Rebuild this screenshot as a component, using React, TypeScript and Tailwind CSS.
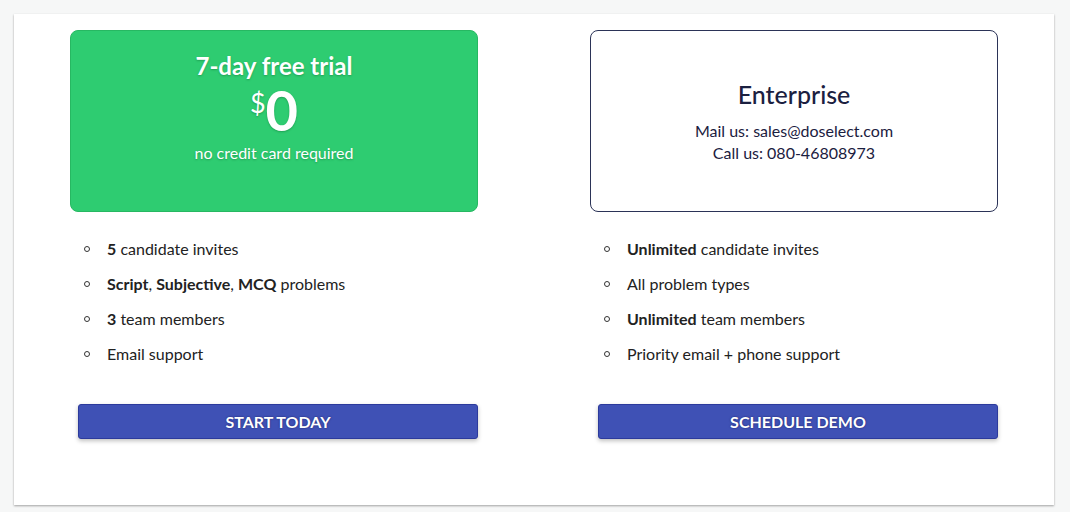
const font = { fontFamily: "Lato, 'Noto Sans', sans-serif" };

type Part = string | { b: string };

const trialFeatures: Part[][] = [
  [{ b: "5" }, " candidate invites"],
  [{ b: "Script" }, ", ", { b: "Subjective" }, ", ", { b: "MCQ" }, " problems"],
  [{ b: "3" }, " team members"],
  ["Email support"],
];

const enterpriseFeatures: Part[][] = [
  [{ b: "Unlimited" }, " candidate invites"],
  ["All problem types"],
  [{ b: "Unlimited" }, " team members"],
  ["Priority email + phone support"],
];

function FeatureList({ items }: { items: Part[][] }) {
  return (
    <ul className="mt-[19px] pl-[14px] text-[16px] leading-[35px] text-[#222]">
      {items.map((parts, i) => (
        <li key={i} className="flex items-center">
          {/* hollow circle bullet */}
          <span className="w-[6px] h-[6px] rounded-full border-[1.5px] border-[#333] mr-[17px] shrink-0" />
          <span>
            {parts.map((p, j) =>
              typeof p === "string" ? (
                <span key={j}>{p}</span>
              ) : (
                <span key={j} className="font-bold">
                  {p.b}
                </span>
              )
            )}
          </span>
        </li>
      ))}
    </ul>
  );
}

function ActionButton({ label }: { label: string }) {
  return (
    <div className="mt-[33px] pl-[8px]">
      <button className="w-full h-[35px] rounded-[3px] bg-[#3f51b5] border border-[#2c3a9c] text-white font-bold text-[16px] uppercase shadow-[0_2px_4px_rgba(0,0,0,0.25)] [text-shadow:0_0_2px_rgba(0,0,60,0.6)]">
        {label}
      </button>
    </div>
  );
}

export default function App() {
  return (
    <div className="min-h-[512px] bg-[#f6f7f7] pt-[14px] pl-[14px] pr-[16px] pb-[6px]" style={font}>
      <div className="bg-white shadow-[0_1px_2px_rgba(0,0,0,0.35)] px-[56px] pt-[16px] pb-[66px] grid grid-cols-2 gap-[112px]">
        <div>
          <div className="h-[182px] rounded-[8px] bg-[#2ecc71] border border-[#27b862] flex flex-col items-center pt-[18px] text-white [text-shadow:0_1px_2px_rgba(0,80,30,0.35)]">
            <div className="text-[24px] font-bold leading-[34px]">7-day free trial</div>
            <div className="flex items-start leading-none mt-[2px]">
              <span className="text-[27px] mt-[4px]">$</span>
              <span className="text-[56px] font-bold leading-[50px]">0</span>
            </div>
            <div className="text-[16px] leading-[22px] mt-[7px]">no credit card required</div>
          </div>
          <FeatureList items={trialFeatures} />
          <ActionButton label="Start today" />
        </div>
        <div>
          <div className="h-[182px] rounded-[8px] border-[1.5px] border-[#2b3357] flex flex-col items-center justify-center text-[#1b2040]">
            <div className="text-[25px] font-medium leading-[32px]">Enterprise</div>
            <div className="text-[16px] leading-[22px] mt-[10px] text-center">
              <div>Mail us: sales@doselect.com</div>
              <div>Call us: 080-46808973</div>
            </div>
          </div>
          <FeatureList items={enterpriseFeatures} />
          <ActionButton label="Schedule demo" />
        </div>
      </div>
    </div>
  );
}
